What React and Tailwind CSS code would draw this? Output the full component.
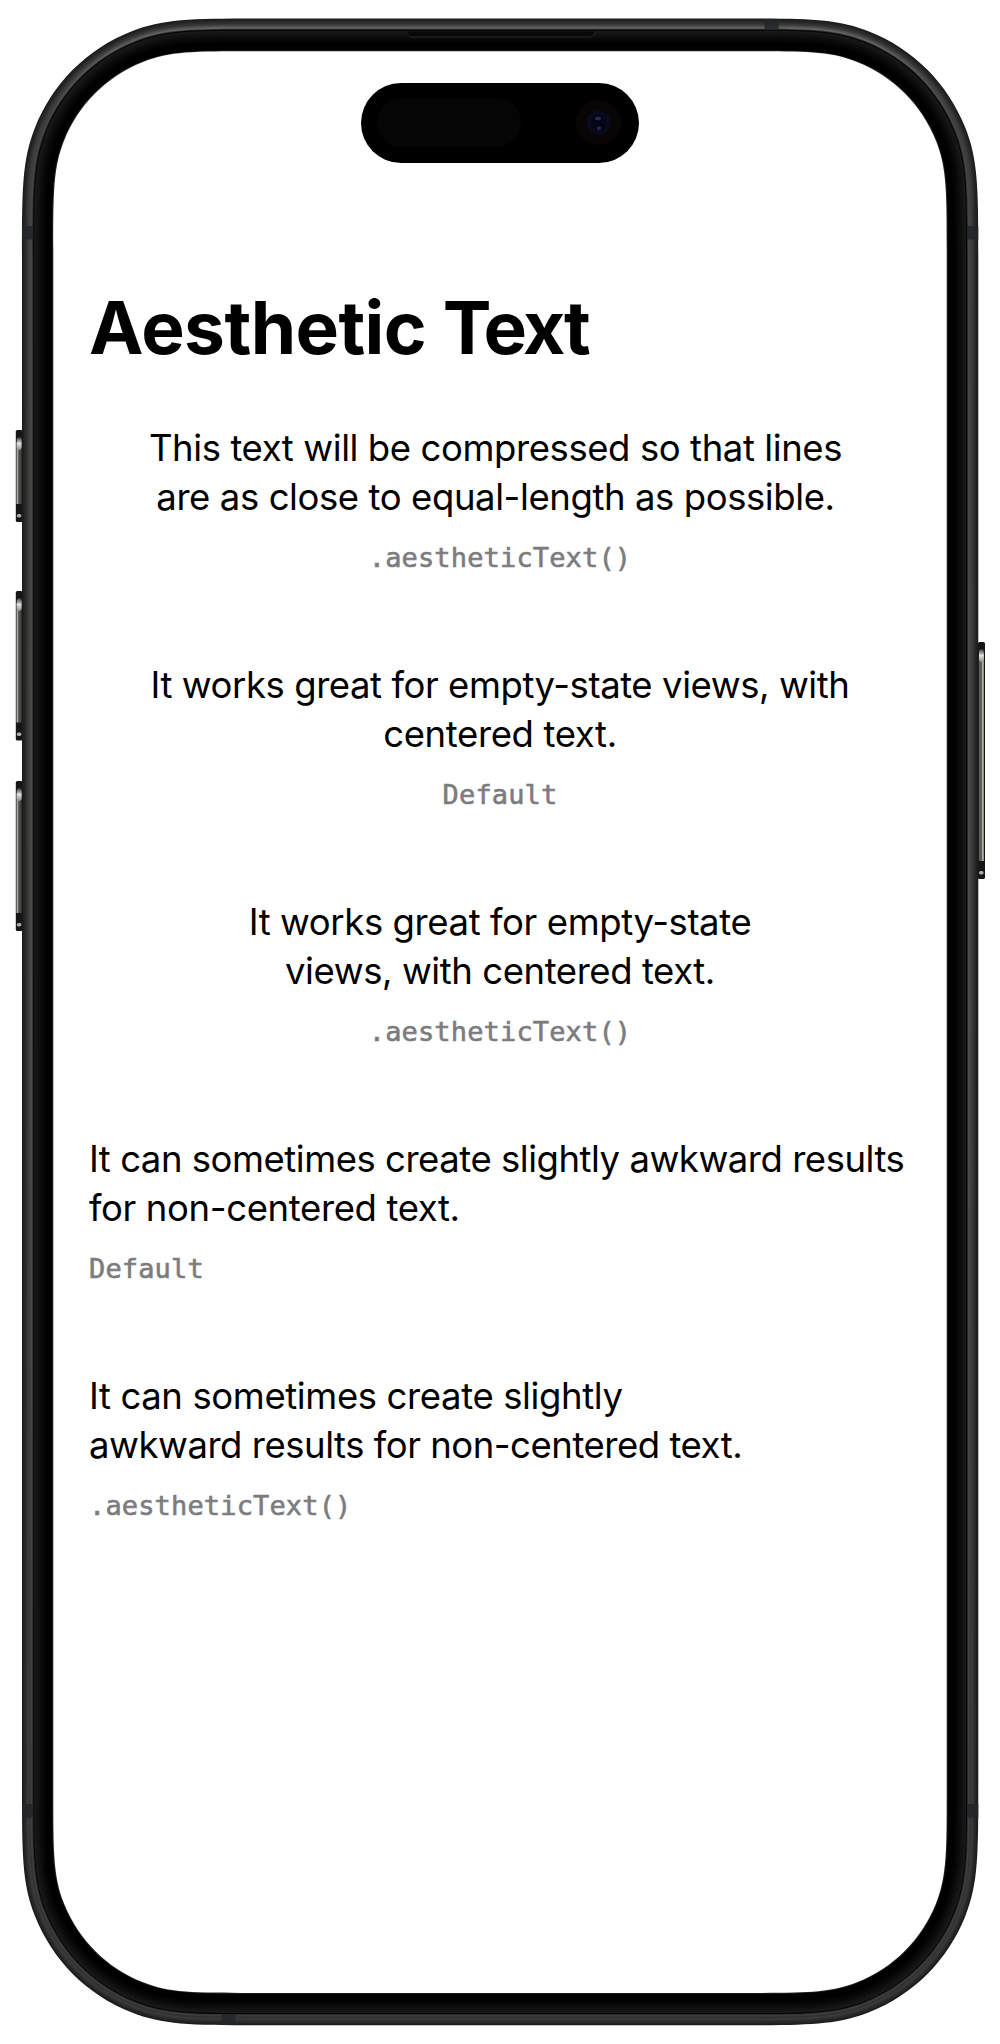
import React from "react";

// Continuous-curvature rounded rectangle.
function squircle(x0, y0, x1, y1, r) {
  const a = 1.4 * r, b = 0.987 * r, c = 0.82 * r, d = 0.6315 * r;
  const e = 0.0749 * r, f = 0.3749 * r, g = 0.1766 * r;
  return `M${x0 + a} ${y0}H${x1 - a}C${x1 - b} ${y0} ${x1 - c} ${y0} ${x1 - d} ${y0 + e}C${x1 - f} ${y0 + g} ${x1 - g} ${y0 + f} ${x1 - e} ${y0 + d}C${x1} ${y0 + c} ${x1} ${y0 + b} ${x1} ${y0 + a}V${y1 - a}C${x1} ${y1 - b} ${x1} ${y1 - c} ${x1 - e} ${y1 - d}C${x1 - g} ${y1 - f} ${x1 - f} ${y1 - g} ${x1 - d} ${y1 - e}C${x1 - c} ${y1} ${x1 - b} ${y1} ${x1 - a} ${y1}H${x0 + a}C${x0 + b} ${y1} ${x0 + c} ${y1} ${x0 + d} ${y1 - e}C${x0 + f} ${y1 - g} ${x0 + g} ${y1 - f} ${x0 + e} ${y1 - d}C${x0} ${y1 - c} ${x0} ${y1 - b} ${x0} ${y1 - a}V${y0 + a}C${x0} ${y0 + b} ${x0} ${y0 + c} ${x0 + e} ${y0 + d}C${x0 + g} ${y0 + f} ${x0 + f} ${y0 + g} ${x0 + d} ${y0 + e}C${x0 + c} ${y0} ${x0 + b} ${y0} ${x0 + a} ${y0}Z`;
}
const inset = (i) => squircle(22 + i, 18.5 + i, 978.3 - i, 2025.3 - i, 173 - i * 0.98);

const LAYERS = [
  [0, "#1c1c1c"], [1.2, "#222222"], [2.4, "#282828"], [3.6, "#2e2e2e"], [4.8, "#363636"], [6, "#3c3c3c"], [7, "url(#rim)"], [8.8, "url(#rim2)"],
  [10.3, "#2a2a2a"], [11.2, "#050505"], [12.2, "#191919"], [13.8, "#151515"], [15.5, "#111111"], [17.5, "#0c0c0c"], [19.5, "#080808"], [21.5, "#040404"], [24, "#000000"],
];

function SideButton({ x, y, h, w = 7, flip }) {
  return (
    <g>
      <rect x={x} y={y} width={w} height={h} rx="1.6" fill="#161616" />
      <rect x={flip ? x + 3.5 : x + 0.7} y={y + 12} width="2.3" height={h - 30} fill={flip ? "#b0aea9" : "#aaa9a5"} />
      <rect x={flip ? x + 0.8 : x + 2.6} y={y + 12} width="3" height={h - 30} fill={flip ? "#5e5d5a" : "#4a4a48"} />
      <rect x={x + 1} y={y + 7} width="4.8" height="13" rx="2.4" fill="url(#spark)" />
      <rect x={x + 1} y={y + h - 8} width="4.6" height="3.4" rx="1.6" fill="#aaa9a5" />
    </g>
  );
}

function Device() {
  return (
    <svg className="absolute inset-0" width="1000" height="2044" viewBox="0 0 1000 2044" aria-hidden="true">
      <defs>
        <linearGradient id="rim" x1="0" y1="0" x2="0" y2="1">
          <stop offset="0" stopColor="#505050" /><stop offset="0.04" stopColor="#3e3e3e" /><stop offset="0.5" stopColor="#444444" /><stop offset="1" stopColor="#303030" />
        </linearGradient>
        <linearGradient id="rim2" x1="0" y1="0" x2="0" y2="1">
          <stop offset="0" stopColor="#666666" /><stop offset="0.05" stopColor="#444444" /><stop offset="0.5" stopColor="#4e4e4e" /><stop offset="1" stopColor="#3c3c3c" />
        </linearGradient>
        <linearGradient id="spark" x1="0" y1="0" x2="0" y2="1">
          <stop offset="0" stopColor="#333333" /><stop offset="0.5" stopColor="#e4e2de" /><stop offset="1" stopColor="#8e8d8a" />
        </linearGradient>
      </defs>
      <SideButton x={15.8} y={430} h={92} />
      <SideButton x={15.8} y={591} h={149.5} />
      <SideButton x={15.8} y={781} h={150} />
      <SideButton x={978} y={642} h={237} flip />
      {LAYERS.map(([i, fill]) => <path key={i} d={inset(i)} fill={fill} />)}
      <g fill="#22272a" fillOpacity="0.88">
        <rect x="22" y="226" width="11.3" height="13.5" />
        <rect x="967" y="226" width="11.3" height="13.5" />
        <rect x="22" y="1804" width="11.3" height="14" />
        <rect x="967" y="1804" width="11.3" height="14" />
        <rect x="764.5" y="19" width="14" height="11" />
        <rect x="221.5" y="2014" width="14" height="11" />
      </g>
      <path d="M405.500 31.500l3 4q1 1.500 3 1.500h178q2 0 3-1.500l3-4" fill="#080808" stroke="#262626" strokeWidth="1" />
      <path d={squircle(52.3, 50.400, 947.7, 1993.800, 143)} fill="#242424" />
      <path d={squircle(53.3, 51.300, 946.7, 1993, 142)} fill="#ffffff" />
    </svg>
  );
}

function Island() {
  return (
    <div className="mx-auto flex h-[80.5px] w-[278px] shrink-0 items-center justify-between rounded-full bg-black pr-[18px] pl-[16px]">
      <div className="h-[49px] w-[144px] rounded-full bg-[#050505]" />
      <svg width="45" height="45" viewBox="0 0 45 45" aria-hidden="true">
        <circle cx="22.500" cy="22.500" r="22.500" fill="#080507" />
        <circle cx="22.500" cy="22.500" r="12" fill="#0a0b1a" />
        <circle cx="22.500" cy="22.500" r="8" fill="#060518" />
        <ellipse cx="22" cy="18.500" rx="3" ry="1.700" fill="#2a2a62" />
        <ellipse cx="23" cy="28" rx="2.200" ry="1.700" fill="#0e3642" />
        <ellipse cx="22.500" cy="29.600" rx="1.800" ry="0.800" fill="#3a1246" />
      </svg>
    </div>
  );
}

const EXAMPLES = [
  { align: "items-center", shift: "pr-[9px]", lines: [["This text will be compressed so that lines", "tracking-[-0.41px]"], ["are as close to equal-length as possible.", "tracking-[-0.41px]"]], code: ".aestheticText()" },
  { align: "items-center", lines: [["It works great for empty-state views, with", "tracking-[-0.43px]"], ["centered text.", "tracking-[-0.36px]"]], code: "Default" },
  { align: "items-center", lines: [["It works great for empty-state", "tracking-[-0.40px]"], ["views, with centered text.", "tracking-[-0.43px]"]], code: ".aestheticText()" },
  { align: "items-start", lines: [["It can sometimes create slightly awkward results", "tracking-[-0.47px]"], ["for non-centered text.", "tracking-[-0.37px]"]], code: "Default" },
  { align: "items-start", lines: [["It can sometimes create slightly", "tracking-[-0.38px]"], ["awkward results for non-centered text.", "tracking-[-0.47px]"]], code: ".aestheticText()" },
];

function Example({ lines, code, align, shift = "" }) {
  return (
    <section className={"flex h-[237px] flex-col " + align}>
      <p className={"flex flex-col " + align + " " + shift}>
        {lines.map(([text, tracking]) => (
          <span key={text} className={"h-[49px] whitespace-nowrap text-[36.5px] leading-[49px] " + tracking}>{text}</span>
        ))}
      </p>
      <code className="mt-[15.5px] h-[40px] font-['DejaVu_Sans_Mono',monospace] text-[27px] leading-[40px] tracking-[0.15px] text-[#7c7c7e] [-webkit-text-stroke:0.6px_#7c7c7e]">{code}</code>
    </section>
  );
}

export default function App() {
  return (
    <div className="relative h-[2044px] w-[1000px] overflow-hidden bg-white font-['Inter',sans-serif] text-black">
      <Device />
      <main className="relative flex h-full flex-col px-[89px] pt-[82.5px]">
        <Island />
        <h1 className="mt-[120px] h-[90px] whitespace-nowrap text-[73px] leading-[90px] font-bold tracking-[-0.6px]">
          Aesthetic <span className="tracking-[-2.4px]">Text</span>
        </h1>
        <div className="mt-[51px] flex flex-col">
          {EXAMPLES.map((e, i) => <Example key={i} {...e} />)}
        </div>
      </main>
    </div>
  );
}
